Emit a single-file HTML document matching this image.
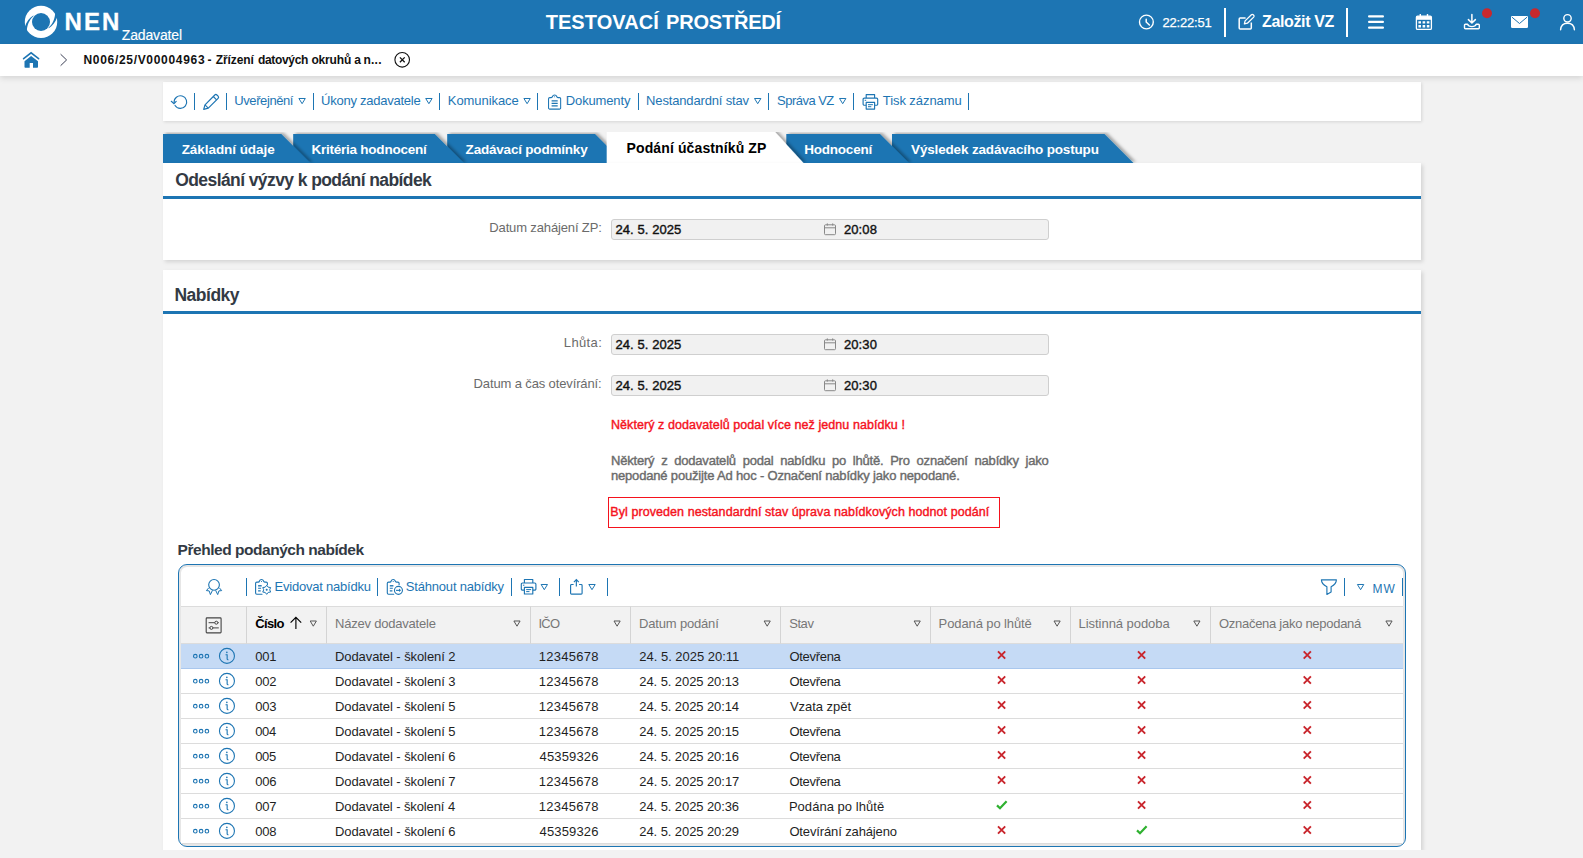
<!DOCTYPE html>
<html lang="cs"><head><meta charset="utf-8"><title>NEN - Zadavatel</title><style>
html,body{margin:0;padding:0}
body{width:1583px;height:858px;position:relative;overflow:hidden;background:#F2F2F2;font-family:"Liberation Sans",sans-serif;color:#222}
.t{position:absolute;white-space:nowrap;line-height:1;display:block;margin:0;font-weight:400;font-style:normal;text-decoration:none}
.bx{position:absolute;display:block}
.sp{position:absolute;display:block}
.ic{position:absolute;overflow:visible;display:block}
table{position:absolute;border-collapse:collapse;table-layout:fixed}

table{border-collapse:separate;border-spacing:0}
th,td{padding:0;margin:0;font-weight:400;text-align:left}
th{height:36px;background:#f2f2f2;border-top:1px solid #dcdcdc;border-bottom:1px solid #dcdcdc;border-right:1px solid #d4d4d4}
th:last-child{border-right:0}
td{height:24px;border-bottom:1px solid #dcdcdc;background:#fff}
tr.sel td{background:#C5DAF5;border-bottom-color:#a9c7ee}
</style></head>
<body>
<header><div class="bx" style="left:0;top:0;width:1583px;height:44px;background:#1D75B3"></div><svg class="ic" style="left:24px;top:5px" width="34" height="34" viewBox="24 5 34 34">
<circle cx="41" cy="21.9" r="16.2" fill="#fff"/><circle cx="41" cy="22" r="9" fill="#1D75B3"/>
<path d="M33.300 15.600C29.500 18 26.600 21.500 24.700 27.200L26.800 31.400C26.900 25.500 29.300 19.800 33.600 16.100Z" fill="#1D75B3"/>
<path d="M33.300 15.600C29.500 18 26.600 21.500 24.700 27.200L26.800 31.400C26.900 25.500 29.300 19.800 33.600 16.100Z" fill="#1D75B3" transform="rotate(180 41 21.950)"/>
</svg><span class="t" style="left:64.5px;top:10px;font-size:24px;font-weight:700;color:#fff;letter-spacing:2.12px;-webkit-text-stroke:.300px;">NEN</span><span class="t" style="left:121.75px;top:28px;font-size:14px;color:#fff;letter-spacing:-0.14px;-webkit-text-stroke:.150px;">Zadavatel</span><span class="t" style="left:545.65px;top:12px;font-size:20px;font-weight:700;color:#fff;letter-spacing:0.06px;">TESTOVACÍ</span><span class="t" style="left:666.05px;top:12px;font-size:20px;font-weight:700;color:#fff;letter-spacing:-0.21px;">PROSTŘEDÍ</span><svg class="ic" style="left:1138px;top:13px" width="18" height="18" viewBox="1138 13 18 18"><circle cx="1146.400" cy="22" r="6.900" fill="none" stroke="#fff" stroke-width="1.400"/><path d="M1146.200 19.200V22l3.200 3" fill="none" stroke="#fff" stroke-width="1.5" stroke-linecap="round" stroke-linejoin="round"/></svg><span class="t" style="left:1162.5px;top:16px;font-size:13px;color:#fff;letter-spacing:-0.21px;-webkit-text-stroke:.250px;">22:22:51</span><i class="sp" style="left:1224px;top:8px;height:29px;width:2.2px;background:#fff"></i><svg class="ic" style="left:1237px;top:13px" width="19" height="19" viewBox="1237 13 19 19"><path d="M1245.600 18.100h-5.400a1 1 0 0 0-1 1v9a1 1 0 0 0 1 1h10.100a1 1 0 0 0 1-1v-5.600" fill="none" stroke="#fff" stroke-width="1.500"/><path d="M1244.400 23.900l.7-3 6.300-6.100a1.300 1.300 0 0 1 1.800 0l.5.500a1.300 1.300 0 0 1 0 1.800l-6.300 6.100z" fill="none" stroke="#fff" stroke-width="1.300" stroke-linejoin="round"/></svg><span class="t" style="left:1262px;top:14px;font-size:16px;font-weight:700;color:#fff;letter-spacing:-0.36px;">Založit VZ</span><i class="sp" style="left:1346px;top:8px;height:29px;width:2px;background:#fff"></i><svg class="ic" style="left:1368px;top:15px" width="16" height="14" viewBox="0 0 16 14"><rect x="0" y=".2" width="16" height="2.3" rx="1.1" fill="#fff"/><rect x="0" y="5.8" width="16" height="2.3" rx="1.1" fill="#fff"/><rect x="0" y="11.5" width="16" height="2.3" rx="1.1" fill="#fff"/></svg><svg class="ic" style="left:1415px;top:13px" width="18" height="18" viewBox="1415 13 18 18"><rect x="1416.4" y="16.2" width="15" height="13.2" rx="1.2" fill="none" stroke="#fff" stroke-width="1.3"/><rect x="1416.4" y="16.2" width="15" height="3.6" fill="#fff"/><rect x="1419.6" y="14" width="1.4" height="3" fill="#fff"/><rect x="1426.8" y="14" width="1.4" height="3" fill="#fff"/>
<path d="M1418.4 21.2h2.6v2.4h-2.6zM1422.6 21.2h2.6v2.4h-2.6zM1426.8 21.2h2.6v2.4h-2.6zM1418.4 25h2.6v2.4h-2.6zM1422.6 25h2.6v2.4h-2.6zM1426.8 25h2.6v2.4h-2.6z" fill="#fff"/></svg><svg class="ic" style="left:1463px;top:13px" width="30" height="18" viewBox="1463 13 30 18"><path d="M1471.9 14.4v8.2M1468.4 19.6l3.5 3.4 3.5-3.4" fill="none" stroke="#fff" stroke-width="1.5" stroke-linecap="round" stroke-linejoin="round"/><path d="M1467.6 24.3h-2.2a.9.9 0 0 0-.9.9v2.6a.9.9 0 0 0 .9.9h13a.9.9 0 0 0 .9-.9v-2.6a.9.9 0 0 0-.9-.9h-2.2c-.5 1.4-2 2.3-4.300 2.300s-3.800-.9-4.300-2.300z" fill="none" stroke="#fff" stroke-width="1.4" stroke-linejoin="round"/><circle cx="1487" cy="13.2" r="5" fill="#C8282D"/></svg><svg class="ic" style="left:1510px;top:8px" width="32" height="22" viewBox="1510 8 32 22"><rect x="1511" y="16" width="17" height="12" rx="1.3" fill="#fff"/><path d="M1512 17.200l7.500 6.300 7.500-6.300" fill="none" stroke="#1D75B3" stroke-width="1"/><circle cx="1535" cy="13.2" r="5" fill="#C8282D"/></svg><svg class="ic" style="left:1559px;top:13px" width="18" height="18" viewBox="1559 13 18 18"><circle cx="1567.5" cy="18.3" r="3.7" fill="none" stroke="#fff" stroke-width="1.4"/><path d="M1560.6 29.8c.3-4.300 3.200-6.600 6.900-6.600s6.600 2.300 6.900 6.600" fill="none" stroke="#fff" stroke-width="1.4" stroke-linecap="round"/></svg></header>
<nav style="position:absolute;left:0;top:0;width:0;height:0;z-index:2"><div class="bx" style="left:0;top:44px;width:1583px;height:32px;background:#fff;box-shadow:0 2px 6px rgba(0,0,0,.13)"></div><svg class="ic" style="left:22px;top:51px" width="18" height="18" viewBox="22 51 18 18"><path d="M23.600 58.700L31.100 52.800l7.500 5.900" fill="none" stroke="#1D75B3" stroke-width="1.600" stroke-linecap="round" stroke-linejoin="miter"/><path d="M24.500 61.300L31.100 56l6.900 5.300v5.600a.8.800 0 0 1-.8.800h-4.200v-4.700h-3.300v4.700h-4.400a.8.800 0 0 1-.8-.8z" fill="#1D75B3"/></svg><svg class="ic" style="left:59px;top:53px" width="10" height="14" viewBox="59 53 10 14"><path d="M60.600 54.200l6 5.750-6 5.750" fill="none" stroke="#3b3f55" stroke-width="1"/></svg><span class="t" style="left:83.45px;top:54px;font-size:12px;font-weight:700;color:#111;letter-spacing:0.69px;">N006/25/V00004963</span><span class="t" style="left:207.4px;top:54px;font-size:12px;font-weight:700;color:#111;">-</span><span class="t" style="left:215.75px;top:54px;font-size:12px;font-weight:700;color:#111;letter-spacing:-0.09px;">Zřízení</span><span class="t" style="left:257.9px;top:54px;font-size:12px;font-weight:700;color:#111;letter-spacing:-0.31px;">datových</span><span class="t" style="left:311.4px;top:54px;font-size:12px;font-weight:700;color:#111;letter-spacing:-0.16px;">okruhů</span><span class="t" style="left:354.35px;top:54px;font-size:12px;font-weight:700;color:#111;">a</span><span class="t" style="left:363.45px;top:54px;font-size:12px;font-weight:700;color:#111;letter-spacing:0.25px;">n...</span><svg class="ic" style="left:394px;top:51px" width="17" height="17" viewBox="394 51 17 17"><circle cx="402.200" cy="59.800" r="7.300" fill="none" stroke="#111" stroke-width="1.100"/><path d="M399.900 57.400l4.800 4.800m0-4.800l-4.800 4.800" stroke="#111" stroke-width="1.300" fill="none"/></svg></nav>
<main>
<div class="bx" style="left:163px;top:82px;width:1258px;height:39px;background:#fff;box-shadow:1px 1px 3px rgba(0,0,0,.12)"></div><svg class="ic" style="left:170px;top:93px" width="19" height="18" viewBox="170 93 19 18"><path d="M174.130 102.650A6.300 6.300 0 1 1 175.060 105.440" fill="none" stroke="#1D75B3" stroke-width="1.150" stroke-linecap="round"/><path d="M171.300 101.300l2.650 2.400 2.250-2.300" fill="none" stroke="#1D75B3" stroke-width="1.150" stroke-linecap="round" stroke-linejoin="miter"/></svg><i class="sp" style="left:194px;top:93px;height:17px;width:1px;background:#1D75B3"></i><svg class="ic" style="left:202px;top:93px" width="18" height="18" viewBox="202 93 18 18"><path d="M203.700 109.400l1.300-4.600 9.800-9.800a1.500 1.500 0 0 1 2.100 0l1.200 1.200a1.500 1.500 0 0 1 0 2.100l-9.800 9.800z" fill="none" stroke="#1D75B3" stroke-width="1.200" stroke-linejoin="round"/><path d="M213.300 96.500l3.300 3.300M205 104.800l3.300 3.300" stroke="#1D75B3" stroke-width="1.100" fill="none"/></svg><i class="sp" style="left:226px;top:93px;height:17px;width:1px;background:#1D75B3"></i><span class="t" style="left:234.3px;top:94px;font-size:13px;color:#1D75B3;letter-spacing:-0.41px;">Uveřejnění</span><svg class="ic" style="left:298px;top:97px" width="7.6" height="6.4" viewBox="-0.3 -0.9 7.6 6.4"><path d="M.6 .6H7L3.8 5.8Z" fill="none" stroke="#1D75B3" stroke-width="1" stroke-linejoin="round"/></svg><i class="sp" style="left:313px;top:93px;height:17px;width:1px;background:#1D75B3"></i><span class="t" style="left:321px;top:94px;font-size:13px;color:#1D75B3;letter-spacing:-0.24px;">Úkony zadavatele</span><svg class="ic" style="left:425px;top:97px" width="7.6" height="6.4" viewBox="-0.1 -0.9 7.6 6.4"><path d="M.6 .6H7L3.8 5.8Z" fill="none" stroke="#1D75B3" stroke-width="1" stroke-linejoin="round"/></svg><i class="sp" style="left:439px;top:93px;height:17px;width:1px;background:#1D75B3"></i><span class="t" style="left:447.8px;top:94px;font-size:13px;color:#1D75B3;letter-spacing:-0.07px;">Komunikace</span><svg class="ic" style="left:523px;top:97px" width="7.6" height="6.4" viewBox="-0.3 -0.9 7.6 6.4"><path d="M.6 .6H7L3.8 5.8Z" fill="none" stroke="#1D75B3" stroke-width="1" stroke-linejoin="round"/></svg><i class="sp" style="left:537px;top:93px;height:17px;width:1px;background:#1D75B3"></i><svg class="ic" style="left:547px;top:93px" width="15" height="17" viewBox="0 -0.4 15 17"><path d="M2.750 4.200H4.200C5 4.200 5.300 3.800 5.500 3.100C5.800 2.100 6.600 1.500 7.600 1.500S9.400 2.100 9.700 3.100C9.900 3.800 10.200 4.200 11 4.200H12.450a1.200 1.200 0 0 1 1.200 1.200v9.100a1.200 1.200 0 0 1-1.200 1.200H2.750a1.200 1.200 0 0 1-1.200-1.200V5.400a1.200 1.200 0 0 1 1.200-1.200z" fill="none" stroke="#1D75B3" stroke-width="1.050" stroke-linejoin="round"/><circle cx="7.600" cy="3.300" r=".5" fill="#1D75B3"/><path d="M4.600 7.500h6.100M4.600 10h6.100M4.600 12.450h6.100" stroke="#1D75B3" stroke-width="1.300"/></svg><span class="t" style="left:565.8px;top:94px;font-size:13px;color:#1D75B3;letter-spacing:-0.14px;">Dokumenty</span><i class="sp" style="left:638px;top:93px;height:17px;width:1px;background:#1D75B3"></i><span class="t" style="left:646.1px;top:94px;font-size:13px;color:#1D75B3;letter-spacing:-0.16px;">Nestandardní stav</span><svg class="ic" style="left:753px;top:97px" width="7.6" height="6.4" viewBox="-0.9 -0.9 7.6 6.4"><path d="M.6 .6H7L3.8 5.8Z" fill="none" stroke="#1D75B3" stroke-width="1" stroke-linejoin="round"/></svg><i class="sp" style="left:768px;top:93px;height:17px;width:1px;background:#1D75B3"></i><span class="t" style="left:777.05px;top:94px;font-size:13px;color:#1D75B3;letter-spacing:-0.52px;">Správa VZ</span><svg class="ic" style="left:838px;top:97px" width="7.6" height="6.4" viewBox="-0.9 -0.9 7.6 6.4"><path d="M.6 .6H7L3.8 5.8Z" fill="none" stroke="#1D75B3" stroke-width="1" stroke-linejoin="round"/></svg><i class="sp" style="left:853px;top:93px;height:17px;width:1px;background:#1D75B3"></i><svg class="ic" style="left:862px;top:93px" width="17" height="17" viewBox="-0.1 -0.1 17 17"><path d="M4.100 5V1.500h8.400V5" fill="none" stroke="#1D75B3" stroke-width="1.150" stroke-linejoin="round"/><path d="M4.100 12.100H2.200a1.200 1.200 0 0 1-1.200-1.200V6.200a1.200 1.200 0 0 1 1.200-1.200h12.200a1.200 1.200 0 0 1 1.200 1.200v4.700a1.200 1.200 0 0 1-1.200 1.200h-1.900" fill="none" stroke="#1D75B3" stroke-width="1.150"/><rect x="4.100" y="9.300" width="8.400" height="6.700" fill="none" stroke="#1D75B3" stroke-width="1.150" stroke-linejoin="round"/><path d="M5.900 11.600h4.900M5.900 13.600h3.300" stroke="#1D75B3" stroke-width="1"/><path d="M2.600 7.200h1.500" stroke="#1D75B3" stroke-width="1"/></svg><span class="t" style="left:882.75px;top:94px;font-size:13px;color:#1D75B3;letter-spacing:-0.07px;">Tisk záznamu</span><i class="sp" style="left:968px;top:93px;height:17px;width:1px;background:#1D75B3"></i>
<svg class="ic" style="left:150px;top:132px;overflow:hidden" width="1000" height="31" viewBox="150 132 1000 31"><defs><filter id="ts" x="-5%" y="-30%" width="110%" height="160%"><feDropShadow dx="2.500" dy="-1" stdDeviation="1.700" flood-color="#000" flood-opacity=".32"/></filter></defs><polygon points="892,134 1104.5,134 1133.5,163 892,163" fill="#1D75B3" filter="url(#ts)"/><polygon points="786.3,134 880,134 909,163 786.3,163" fill="#1D75B3" filter="url(#ts)"/><polygon points="447.2,134 595,134 624,163 447.2,163" fill="#1D75B3" filter="url(#ts)"/><polygon points="293.2,134 434.8,134 463.8,163 293.2,163" fill="#1D75B3" filter="url(#ts)"/><polygon points="163,134 281.3,134 310.3,163 163,163" fill="#1D75B3" filter="url(#ts)"/><polygon points="606.7,132 775,132 803.5,163 606.7,163" fill="#fff" filter="url(#ts)"/></svg><span class="t" style="left:181.7px;top:143px;font-size:13.5px;font-weight:700;color:#fff;letter-spacing:-0.06px;">Základní údaje</span><span class="t" style="left:311.5px;top:143px;font-size:13.5px;font-weight:700;color:#fff;letter-spacing:-0.24px;">Kritéria hodnocení</span><span class="t" style="left:465.6px;top:143px;font-size:13.5px;font-weight:700;color:#fff;letter-spacing:-0.2px;">Zadávací podmínky</span><span class="t" style="left:626.5px;top:141px;font-size:14px;font-weight:700;color:#000;letter-spacing:0.12px;">Podání účastníků ZP</span><span class="t" style="left:804.2px;top:143px;font-size:13.5px;font-weight:700;color:#fff;letter-spacing:-0.21px;">Hodnocení</span><span class="t" style="left:911.05px;top:143px;font-size:13.5px;font-weight:700;color:#fff;letter-spacing:-0.16px;">Výsledek zadávacího postupu</span>
<section><div class="bx" style="left:163px;top:163px;width:1258px;height:97px;background:#fff;box-shadow:1.500px 2px 4px rgba(0,0,0,.13)"></div><div class="bx" style="left:163px;top:196px;width:1258px;height:3px;background:#1D75B3"></div><h2 class="t" style="left:175.25px;top:172px;font-size:17.5px;font-weight:700;color:#333a44;letter-spacing:-0.59px;">Odeslání výzvy k podání nabídek</h2><div class="bx" style="left:611px;top:219px;width:436px;height:19px;background:#f1f1f1;border:1px solid #cfcfcf;border-radius:3px"></div><label class="t" style="left:489.3px;top:221px;font-size:13px;color:#6b6b6b;letter-spacing:-0.14px;">Datum zahájení ZP:</label><span class="t" style="left:615.5px;top:223px;font-size:13px;-webkit-text-stroke:.4px;color:#111;letter-spacing:0.07px;">24. 5. 2025</span><svg class="ic" style="left:824px;top:223px" width="12" height="12" viewBox="0 -0.2 12 12"><rect x=".5" y="1.600" width="11" height="9.900" rx="1" fill="none" stroke="#888" stroke-width="1"/><path d="M.5 4.600h11M3.300 .2v2.200M8.700 .2v2.200" stroke="#888" stroke-width="1" fill="none"/></svg><span class="t" style="left:843.9px;top:223px;font-size:13px;-webkit-text-stroke:.4px;color:#111;letter-spacing:0.11px;">20:08</span></section>
<section><div class="bx" style="left:163px;top:270px;width:1258px;height:580px;background:#fff;box-shadow:1.500px 2px 4px rgba(0,0,0,.13)"></div><div class="bx" style="left:0;top:850px;width:1583px;height:8px;background:#F2F2F2"></div><div class="bx" style="left:163px;top:311px;width:1258px;height:3px;background:#1D75B3"></div><h2 class="t" style="left:174.45px;top:287px;font-size:17.5px;font-weight:700;color:#333a44;letter-spacing:-0.49px;">Nabídky</h2><div class="bx" style="left:611px;top:334px;width:436px;height:19px;background:#f1f1f1;border:1px solid #cfcfcf;border-radius:3px"></div><label class="t" style="left:563.8px;top:336px;font-size:13px;color:#6b6b6b;letter-spacing:0.36px;">Lhůta:</label><span class="t" style="left:615.5px;top:338px;font-size:13px;-webkit-text-stroke:.4px;color:#111;letter-spacing:0.07px;">24. 5. 2025</span><svg class="ic" style="left:824px;top:338px" width="12" height="12" viewBox="0 -0.2 12 12"><rect x=".5" y="1.600" width="11" height="9.900" rx="1" fill="none" stroke="#888" stroke-width="1"/><path d="M.5 4.600h11M3.300 .2v2.200M8.700 .2v2.200" stroke="#888" stroke-width="1" fill="none"/></svg><span class="t" style="left:843.9px;top:338px;font-size:13px;-webkit-text-stroke:.4px;color:#111;letter-spacing:0.11px;">20:30</span><div class="bx" style="left:611px;top:375px;width:436px;height:19px;background:#f1f1f1;border:1px solid #cfcfcf;border-radius:3px"></div><label class="t" style="left:473.6px;top:377px;font-size:13px;color:#6b6b6b;letter-spacing:-0.13px;">Datum a čas otevírání:</label><span class="t" style="left:615.5px;top:379px;font-size:13px;-webkit-text-stroke:.4px;color:#111;letter-spacing:0.07px;">24. 5. 2025</span><svg class="ic" style="left:824px;top:379px" width="12" height="12" viewBox="0 -0.2 12 12"><rect x=".5" y="1.600" width="11" height="9.900" rx="1" fill="none" stroke="#888" stroke-width="1"/><path d="M.5 4.600h11M3.300 .2v2.200M8.700 .2v2.200" stroke="#888" stroke-width="1" fill="none"/></svg><span class="t" style="left:843.9px;top:379px;font-size:13px;-webkit-text-stroke:.4px;color:#111;letter-spacing:0.11px;">20:30</span><span class="t" style="left:610.95px;top:419px;font-size:12.5px;-webkit-text-stroke:.4px;color:#f5121d;letter-spacing:0.07px;">Některý z dodavatelů podal více než jednu nabídku !</span><span class="t" style="left:610.95px;top:454px;font-size:13px;-webkit-text-stroke:.4px;color:#6b6b6b;letter-spacing:-0.19px;word-spacing:3.32px;">Některý z dodavatelů podal nabídku po lhůtě. Pro označení nabídky jako</span><span class="t" style="left:610.95px;top:469px;font-size:13px;-webkit-text-stroke:.4px;color:#6b6b6b;letter-spacing:-0.17px;">nepodané použijte Ad hoc - Označení nabídky jako nepodané.</span><div class="bx" style="left:608px;top:497px;width:390px;height:29px;border:1px solid #f5121d"></div><span class="t" style="left:610.35px;top:506px;font-size:12.5px;-webkit-text-stroke:.4px;color:#f5121d;letter-spacing:0.07px;">Byl proveden nestandardní stav úprava nabídkových hodnot podání</span><h3 class="t" style="left:177.6px;top:542px;font-size:15.5px;font-weight:700;color:#333a44;letter-spacing:-0.47px;">Přehled podaných nabídek</h3><div class="bx" style="left:178px;top:564px;width:1226px;height:281px;border:1px solid #1D75B3;border-radius:9px;box-shadow:inset 0 0 0 2px #e6e6e6"></div><svg class="ic" style="left:205px;top:578px" width="18" height="18" viewBox="205 578 18 18"><circle cx="214.050" cy="584.850" r="5.350" fill="none" stroke="#1D75B3" stroke-width="1.100"/><path d="M208.700 587.900l-2.300 2.700 2.800.3 1.200 3.700 2.100-4.300M219.400 587.900l2.300 2.700-2.800.3-1.200 3.700-2.100-4.300" fill="none" stroke="#1D75B3" stroke-width="1" stroke-linejoin="miter"/></svg><i class="sp" style="left:246px;top:578px;height:18px;width:1px;background:#1D75B3"></i><svg class="ic" style="left:254px;top:579px" width="18" height="17" viewBox="0 0 18 17"><path d="M8 15.200H2.800a1.200 1.200 0 0 1-1.200-1.200V4.300a1.200 1.200 0 0 1 1.200-1.200H4.200C5 3.100 5.300 2.700 5.500 2C5.800 1 6.500.5 7.500.5S9.200 1 9.500 2C9.700 2.700 10 3.100 10.800 3.100H12.200a1.200 1.200 0 0 1 1.200 1.200v1.500" fill="none" stroke="#1D75B3" stroke-width="1.100" stroke-linecap="round"/><circle cx="7.500" cy="2.500" r=".55" fill="#1D75B3"/><path d="M4.100 6.800h3.600" stroke="#1D75B3" stroke-width="1.400"/><path d="M4.100 9.300h3M4.100 11.900h2.600" stroke="#1D75B3" stroke-width="1.100"/><path d="M12.70 6.25L14.20 8.20L16.64 8.53L15.70 10.80L16.64 13.07L14.20 13.40L12.70 15.35L11.20 13.40L8.76 13.07L9.70 10.80L8.76 8.53L11.20 8.20Z" fill="#fff" stroke="#1D75B3" stroke-width="1" stroke-linejoin="round"/><circle cx="12.700" cy="10.800" r="1" fill="#1D75B3"/></svg><span class="t" style="left:274.5px;top:580px;font-size:13px;color:#1D75B3;letter-spacing:-0.22px;">Evidovat nabídku</span><i class="sp" style="left:377px;top:578px;height:18px;width:1px;background:#1D75B3"></i><svg class="ic" style="left:385px;top:579px" width="18" height="17" viewBox="-0.7 0 18 17"><path d="M8 15.200H2.800a1.200 1.200 0 0 1-1.200-1.200V4.300a1.200 1.200 0 0 1 1.200-1.200H4.200C5 3.100 5.300 2.700 5.500 2C5.800 1 6.500.5 7.500.5S9.200 1 9.500 2C9.700 2.700 10 3.100 10.800 3.100H12.200a1.200 1.200 0 0 1 1.200 1.200v1.500" fill="none" stroke="#1D75B3" stroke-width="1.100" stroke-linecap="round"/><circle cx="7.500" cy="2.500" r=".55" fill="#1D75B3"/><path d="M4.100 6.800h3.600" stroke="#1D75B3" stroke-width="1.400"/><path d="M4.100 9.300h3M4.100 11.900h2.600" stroke="#1D75B3" stroke-width="1.100"/><circle cx="12.750" cy="11.350" r="4" fill="#fff" stroke="#1D75B3" stroke-width="1.100"/><path d="M10.300 11.350h4.200" fill="none" stroke="#1D75B3" stroke-width="1.100"/><path d="M13.300 9.600l2 1.750-2 1.750z" fill="#1D75B3"/></svg><span class="t" style="left:405.85px;top:580px;font-size:13px;color:#1D75B3;letter-spacing:-0.2px;">Stáhnout nabídky</span><i class="sp" style="left:511px;top:578px;height:18px;width:1px;background:#1D75B3"></i><svg class="ic" style="left:520px;top:578px" width="17" height="17" viewBox="-0.3 0 17 17"><path d="M4.100 5V1.500h8.400V5" fill="none" stroke="#1D75B3" stroke-width="1.150" stroke-linejoin="round"/><path d="M4.100 12.100H2.200a1.200 1.200 0 0 1-1.200-1.200V6.200a1.200 1.200 0 0 1 1.200-1.200h12.200a1.200 1.200 0 0 1 1.200 1.200v4.700a1.200 1.200 0 0 1-1.200 1.200h-1.900" fill="none" stroke="#1D75B3" stroke-width="1.150"/><rect x="4.100" y="9.300" width="8.400" height="6.700" fill="none" stroke="#1D75B3" stroke-width="1.150" stroke-linejoin="round"/><path d="M5.900 11.600h4.900M5.900 13.600h3.300" stroke="#1D75B3" stroke-width="1"/><path d="M2.600 7.200h1.500" stroke="#1D75B3" stroke-width="1"/></svg><svg class="ic" style="left:540px;top:583px" width="7.6" height="6.4" viewBox="-0.5 -0.9 7.6 6.4"><path d="M.6 .6H7L3.8 5.8Z" fill="none" stroke="#1D75B3" stroke-width="1" stroke-linejoin="round"/></svg><i class="sp" style="left:559px;top:578px;height:18px;width:1px;background:#1D75B3"></i><svg class="ic" style="left:568px;top:578px" width="16" height="18" viewBox="568 578 16 18"><path d="M573.600 584.500h-2.100a.9.900 0 0 0-.9.900v7.800a.9.900 0 0 0 .9.900h9.700a.9.900 0 0 0 .9-.9v-7.800a.9.900 0 0 0-.9-.9h-2.100" fill="none" stroke="#1D75B3" stroke-width="1.150"/><path d="M576.350 586.600v-6.800M573.900 582.100l2.450-2.450 2.450 2.450" fill="none" stroke="#1D75B3" stroke-width="1.150" stroke-linejoin="miter"/></svg><svg class="ic" style="left:588px;top:583px" width="7.6" height="6.4" viewBox="-0.2 -0.9 7.6 6.4"><path d="M.6 .6H7L3.8 5.8Z" fill="none" stroke="#1D75B3" stroke-width="1" stroke-linejoin="round"/></svg><i class="sp" style="left:607px;top:578px;height:18px;width:1px;background:#1D75B3"></i><svg class="ic" style="left:1320px;top:578px" width="18" height="18" viewBox="1320 578 18 18"><path d="M1321.400 579.800h15c0 3.300-2.500 5.500-5.300 7v5.300l-4.200 2.300v-7.600c-2.900-1.500-5.500-3.700-5.500-7z" fill="none" stroke="#1D75B3" stroke-width="1.150" stroke-linejoin="round"/></svg><i class="sp" style="left:1344px;top:578px;height:18px;width:1px;background:#1D75B3"></i><svg class="ic" style="left:1356px;top:583px" width="7.6" height="6.4" viewBox="-0.8 -0.9 7.6 6.4"><path d="M.6 .6H7L3.8 5.8Z" fill="none" stroke="#1D75B3" stroke-width="1" stroke-linejoin="round"/></svg><span class="t" style="left:1372.4px;top:583px;font-size:12px;color:#1D75B3;letter-spacing:1.15px;">MW</span><i class="sp" style="left:1402px;top:578px;height:18px;width:1px;background:#1D75B3"></i><table style="left:181px;top:606px;width:1222px"><colgroup><col style="width:66px"><col style="width:80px"><col style="width:204px"><col style="width:100px"><col style="width:150px"><col style="width:150px"><col style="width:140px"><col style="width:140px"><col style="width:192px"></colgroup><thead><tr><th><svg class="ic" style="left:24px;top:11px" width="17" height="16" viewBox="-0.6 -0.3 17 16"><rect x=".6" y=".6" width="14.900" height="15" rx=".8" fill="none" stroke="#444" stroke-width="1.100"/><path d="M3 5.400h6.200M12.200 5.400h1M3 10.600h1.300M7.200 10.600h6" stroke="#444" stroke-width="1" fill="none"/><circle cx="10.700" cy="5.400" r="1.500" fill="none" stroke="#444" stroke-width="1"/><circle cx="5.800" cy="10.600" r="1.500" fill="none" stroke="#444" stroke-width="1"/></svg></th><th><span class="t" style="left:74.3px;top:11px;font-size:13px;font-weight:700;color:#000;letter-spacing:-0.66px;">Číslo</span><svg class="ic" style="left:108px;top:10px" width="12" height="13" viewBox="-0.9 -0.6 12 13"><path d="M6 12.400V1M.7 6.100L6 .8l5.300 5.300" fill="none" stroke="#000" stroke-width="1.150"/></svg><svg class="ic" style="left:128px;top:14px" width="7.4" height="6.4" viewBox="-0.6 -0.4 7.4 6.4"><path d="M.6 .6H6.8L3.7 5.8Z" fill="none" stroke="#555" stroke-width="1" stroke-linejoin="round"/></svg></th><th><span class="t" style="left:154px;top:11px;font-size:13px;color:#777;letter-spacing:-0.21px;">Název dodavatele</span><svg class="ic" style="left:332px;top:14px" width="7.4" height="6.4" viewBox="-0.3 -0.4 7.4 6.4"><path d="M.6 .6H6.8L3.7 5.8Z" fill="none" stroke="#555" stroke-width="1" stroke-linejoin="round"/></svg></th><th><span class="t" style="left:357.55px;top:11px;font-size:13px;color:#777;letter-spacing:-0.83px;">IČO</span><svg class="ic" style="left:432px;top:14px" width="7.4" height="6.4" viewBox="-0.4 -0.4 7.4 6.4"><path d="M.6 .6H6.8L3.7 5.8Z" fill="none" stroke="#555" stroke-width="1" stroke-linejoin="round"/></svg></th><th><span class="t" style="left:458.1px;top:11px;font-size:13px;color:#777;letter-spacing:-0.18px;">Datum podání</span><svg class="ic" style="left:582px;top:14px" width="7.4" height="6.4" viewBox="-0.5 -0.4 7.4 6.4"><path d="M.6 .6H6.8L3.7 5.8Z" fill="none" stroke="#555" stroke-width="1" stroke-linejoin="round"/></svg></th><th><span class="t" style="left:608.15px;top:11px;font-size:13px;color:#777;letter-spacing:-0.42px;">Stav</span><svg class="ic" style="left:732px;top:14px" width="7.4" height="6.4" viewBox="-0.5 -0.4 7.4 6.4"><path d="M.6 .6H6.8L3.7 5.8Z" fill="none" stroke="#555" stroke-width="1" stroke-linejoin="round"/></svg></th><th><span class="t" style="left:757.6px;top:11px;font-size:13px;color:#777;letter-spacing:-0.11px;">Podaná po lhůtě</span><svg class="ic" style="left:872px;top:14px" width="7.4" height="6.4" viewBox="-0.4 -0.4 7.4 6.4"><path d="M.6 .6H6.8L3.7 5.8Z" fill="none" stroke="#555" stroke-width="1" stroke-linejoin="round"/></svg></th><th><span class="t" style="left:897.6px;top:11px;font-size:13px;color:#777;letter-spacing:-0.05px;">Listinná podoba</span><svg class="ic" style="left:1012px;top:14px" width="7.4" height="6.4" viewBox="-0.2 -0.4 7.4 6.4"><path d="M.6 .6H6.8L3.7 5.8Z" fill="none" stroke="#555" stroke-width="1" stroke-linejoin="round"/></svg></th><th><span class="t" style="left:1038px;top:11px;font-size:13px;color:#777;letter-spacing:-0.28px;">Označena jako nepodaná</span><svg class="ic" style="left:1204px;top:14px" width="7.4" height="6.4" viewBox="-0.3 -0.4 7.4 6.4"><path d="M.6 .6H6.8L3.7 5.8Z" fill="none" stroke="#555" stroke-width="1" stroke-linejoin="round"/></svg></th></tr></thead><tbody><tr class="sel"><td><svg class="ic" style="left:11px;top:47px" width="17" height="6" viewBox="-0.8 -0.2 17 6"><circle cx="2.500" cy="3" r="1.800" fill="none" stroke="#1D75B3" stroke-width="1.100"/><circle cx="8.300" cy="3" r="1.800" fill="none" stroke="#1D75B3" stroke-width="1.100"/><circle cx="14.100" cy="3" r="1.800" fill="none" stroke="#1D75B3" stroke-width="1.100"/></svg><svg class="ic" style="left:37px;top:41px" width="17" height="17" viewBox="-0.45 -0.4 17 17"><circle cx="8.500" cy="8.500" r="7.500" fill="none" stroke="#1D75B3" stroke-width="1.100"/><path d="M7.500 7.300h1.200v4.200c0 .6.300.9.900.9" fill="none" stroke="#1D75B3" stroke-width="1.100" stroke-linecap="round"/><circle cx="8.400" cy="5" r=".8" fill="#1D75B3"/></svg></td><td><span class="t" style="left:74.3px;top:44px;font-size:13px;color:#1f1f1f;letter-spacing:-0.3px;">001</span></td><td><span class="t" style="left:154px;top:44px;font-size:13px;color:#1f1f1f;letter-spacing:-0.08px;">Dodavatel - školení 2</span></td><td><span class="t" style="left:357.8px;top:44px;font-size:13px;color:#1f1f1f;letter-spacing:0.25px;">12345678</span></td><td><span class="t" style="left:458.35px;top:44px;font-size:13px;color:#1f1f1f;letter-spacing:-0.02px;">24. 5. 2025 20:11</span></td><td><span class="t" style="left:608.4px;top:44px;font-size:13px;color:#1f1f1f;letter-spacing:-0.29px;">Otevřena</span></td><td><svg class="ic" style="left:815px;top:44px" width="10" height="10" viewBox="-0.6 0 10 10"><path d="M1.400 1.400l7.200 7.200M8.600 1.400l-7.200 7.200" stroke="#C9252C" stroke-width="1.900" fill="none"/></svg></td><td><svg class="ic" style="left:955px;top:44px" width="10" height="10" viewBox="-0.6 0 10 10"><path d="M1.400 1.400l7.200 7.200M8.600 1.400l-7.200 7.200" stroke="#C9252C" stroke-width="1.900" fill="none"/></svg></td><td><svg class="ic" style="left:1121px;top:44px" width="10" height="10" viewBox="-0.3 0 10 10"><path d="M1.400 1.400l7.200 7.200M8.600 1.400l-7.200 7.200" stroke="#C9252C" stroke-width="1.900" fill="none"/></svg></td></tr><tr><td><svg class="ic" style="left:11px;top:72px" width="17" height="6" viewBox="-0.8 -0.2 17 6"><circle cx="2.500" cy="3" r="1.800" fill="none" stroke="#1D75B3" stroke-width="1.100"/><circle cx="8.300" cy="3" r="1.800" fill="none" stroke="#1D75B3" stroke-width="1.100"/><circle cx="14.100" cy="3" r="1.800" fill="none" stroke="#1D75B3" stroke-width="1.100"/></svg><svg class="ic" style="left:37px;top:66px" width="17" height="17" viewBox="-0.45 -0.4 17 17"><circle cx="8.500" cy="8.500" r="7.500" fill="none" stroke="#1D75B3" stroke-width="1.100"/><path d="M7.500 7.300h1.200v4.200c0 .6.300.9.900.9" fill="none" stroke="#1D75B3" stroke-width="1.100" stroke-linecap="round"/><circle cx="8.400" cy="5" r=".8" fill="#1D75B3"/></svg></td><td><span class="t" style="left:74.3px;top:69px;font-size:13px;color:#1f1f1f;letter-spacing:-0.3px;">002</span></td><td><span class="t" style="left:154px;top:69px;font-size:13px;color:#1f1f1f;letter-spacing:-0.08px;">Dodavatel - školení 3</span></td><td><span class="t" style="left:357.8px;top:69px;font-size:13px;color:#1f1f1f;letter-spacing:0.25px;">12345678</span></td><td><span class="t" style="left:458.35px;top:69px;font-size:13px;color:#1f1f1f;letter-spacing:-0.09px;">24. 5. 2025 20:13</span></td><td><span class="t" style="left:608.4px;top:69px;font-size:13px;color:#1f1f1f;letter-spacing:-0.29px;">Otevřena</span></td><td><svg class="ic" style="left:815px;top:69px" width="10" height="10" viewBox="-0.6 0 10 10"><path d="M1.400 1.400l7.200 7.200M8.600 1.400l-7.200 7.200" stroke="#C9252C" stroke-width="1.900" fill="none"/></svg></td><td><svg class="ic" style="left:955px;top:69px" width="10" height="10" viewBox="-0.6 0 10 10"><path d="M1.400 1.400l7.200 7.200M8.600 1.400l-7.200 7.200" stroke="#C9252C" stroke-width="1.900" fill="none"/></svg></td><td><svg class="ic" style="left:1121px;top:69px" width="10" height="10" viewBox="-0.3 0 10 10"><path d="M1.400 1.400l7.200 7.200M8.600 1.400l-7.200 7.200" stroke="#C9252C" stroke-width="1.900" fill="none"/></svg></td></tr><tr><td><svg class="ic" style="left:11px;top:97px" width="17" height="6" viewBox="-0.8 -0.2 17 6"><circle cx="2.500" cy="3" r="1.800" fill="none" stroke="#1D75B3" stroke-width="1.100"/><circle cx="8.300" cy="3" r="1.800" fill="none" stroke="#1D75B3" stroke-width="1.100"/><circle cx="14.100" cy="3" r="1.800" fill="none" stroke="#1D75B3" stroke-width="1.100"/></svg><svg class="ic" style="left:37px;top:91px" width="17" height="17" viewBox="-0.45 -0.4 17 17"><circle cx="8.500" cy="8.500" r="7.500" fill="none" stroke="#1D75B3" stroke-width="1.100"/><path d="M7.500 7.300h1.200v4.200c0 .6.300.9.900.9" fill="none" stroke="#1D75B3" stroke-width="1.100" stroke-linecap="round"/><circle cx="8.400" cy="5" r=".8" fill="#1D75B3"/></svg></td><td><span class="t" style="left:74.3px;top:94px;font-size:13px;color:#1f1f1f;letter-spacing:-0.3px;">003</span></td><td><span class="t" style="left:154px;top:94px;font-size:13px;color:#1f1f1f;letter-spacing:-0.08px;">Dodavatel - školení 5</span></td><td><span class="t" style="left:357.8px;top:94px;font-size:13px;color:#1f1f1f;letter-spacing:0.25px;">12345678</span></td><td><span class="t" style="left:458.35px;top:94px;font-size:13px;color:#1f1f1f;letter-spacing:-0.09px;">24. 5. 2025 20:14</span></td><td><span class="t" style="left:608.9px;top:94px;font-size:13px;color:#1f1f1f;letter-spacing:-0.03px;">Vzata zpět</span></td><td><svg class="ic" style="left:815px;top:94px" width="10" height="10" viewBox="-0.6 0 10 10"><path d="M1.400 1.400l7.200 7.200M8.600 1.400l-7.200 7.200" stroke="#C9252C" stroke-width="1.900" fill="none"/></svg></td><td><svg class="ic" style="left:955px;top:94px" width="10" height="10" viewBox="-0.6 0 10 10"><path d="M1.400 1.400l7.200 7.200M8.600 1.400l-7.200 7.200" stroke="#C9252C" stroke-width="1.900" fill="none"/></svg></td><td><svg class="ic" style="left:1121px;top:94px" width="10" height="10" viewBox="-0.3 0 10 10"><path d="M1.400 1.400l7.200 7.200M8.600 1.400l-7.200 7.200" stroke="#C9252C" stroke-width="1.900" fill="none"/></svg></td></tr><tr><td><svg class="ic" style="left:11px;top:122px" width="17" height="6" viewBox="-0.8 -0.2 17 6"><circle cx="2.500" cy="3" r="1.800" fill="none" stroke="#1D75B3" stroke-width="1.100"/><circle cx="8.300" cy="3" r="1.800" fill="none" stroke="#1D75B3" stroke-width="1.100"/><circle cx="14.100" cy="3" r="1.800" fill="none" stroke="#1D75B3" stroke-width="1.100"/></svg><svg class="ic" style="left:37px;top:116px" width="17" height="17" viewBox="-0.45 -0.4 17 17"><circle cx="8.500" cy="8.500" r="7.500" fill="none" stroke="#1D75B3" stroke-width="1.100"/><path d="M7.500 7.300h1.200v4.200c0 .6.300.9.900.9" fill="none" stroke="#1D75B3" stroke-width="1.100" stroke-linecap="round"/><circle cx="8.400" cy="5" r=".8" fill="#1D75B3"/></svg></td><td><span class="t" style="left:74.3px;top:119px;font-size:13px;color:#1f1f1f;letter-spacing:-0.42px;">004</span></td><td><span class="t" style="left:154px;top:119px;font-size:13px;color:#1f1f1f;letter-spacing:-0.08px;">Dodavatel - školení 5</span></td><td><span class="t" style="left:357.8px;top:119px;font-size:13px;color:#1f1f1f;letter-spacing:0.25px;">12345678</span></td><td><span class="t" style="left:458.35px;top:119px;font-size:13px;color:#1f1f1f;letter-spacing:-0.09px;">24. 5. 2025 20:15</span></td><td><span class="t" style="left:608.4px;top:119px;font-size:13px;color:#1f1f1f;letter-spacing:-0.29px;">Otevřena</span></td><td><svg class="ic" style="left:815px;top:119px" width="10" height="10" viewBox="-0.6 0 10 10"><path d="M1.400 1.400l7.200 7.200M8.600 1.400l-7.200 7.200" stroke="#C9252C" stroke-width="1.900" fill="none"/></svg></td><td><svg class="ic" style="left:955px;top:119px" width="10" height="10" viewBox="-0.6 0 10 10"><path d="M1.400 1.400l7.200 7.200M8.600 1.400l-7.200 7.200" stroke="#C9252C" stroke-width="1.900" fill="none"/></svg></td><td><svg class="ic" style="left:1121px;top:119px" width="10" height="10" viewBox="-0.3 0 10 10"><path d="M1.400 1.400l7.200 7.200M8.600 1.400l-7.200 7.200" stroke="#C9252C" stroke-width="1.900" fill="none"/></svg></td></tr><tr><td><svg class="ic" style="left:11px;top:147px" width="17" height="6" viewBox="-0.8 -0.2 17 6"><circle cx="2.500" cy="3" r="1.800" fill="none" stroke="#1D75B3" stroke-width="1.100"/><circle cx="8.300" cy="3" r="1.800" fill="none" stroke="#1D75B3" stroke-width="1.100"/><circle cx="14.100" cy="3" r="1.800" fill="none" stroke="#1D75B3" stroke-width="1.100"/></svg><svg class="ic" style="left:37px;top:141px" width="17" height="17" viewBox="-0.45 -0.4 17 17"><circle cx="8.500" cy="8.500" r="7.500" fill="none" stroke="#1D75B3" stroke-width="1.100"/><path d="M7.500 7.300h1.200v4.200c0 .6.300.9.900.9" fill="none" stroke="#1D75B3" stroke-width="1.100" stroke-linecap="round"/><circle cx="8.400" cy="5" r=".8" fill="#1D75B3"/></svg></td><td><span class="t" style="left:74.3px;top:144px;font-size:13px;color:#1f1f1f;letter-spacing:-0.42px;">005</span></td><td><span class="t" style="left:154px;top:144px;font-size:13px;color:#1f1f1f;letter-spacing:-0.08px;">Dodavatel - školení 6</span></td><td><span class="t" style="left:358.55px;top:144px;font-size:13px;color:#1f1f1f;letter-spacing:0.14px;">45359326</span></td><td><span class="t" style="left:458.35px;top:144px;font-size:13px;color:#1f1f1f;letter-spacing:-0.09px;">24. 5. 2025 20:16</span></td><td><span class="t" style="left:608.4px;top:144px;font-size:13px;color:#1f1f1f;letter-spacing:-0.29px;">Otevřena</span></td><td><svg class="ic" style="left:815px;top:144px" width="10" height="10" viewBox="-0.6 0 10 10"><path d="M1.400 1.400l7.200 7.200M8.600 1.400l-7.200 7.200" stroke="#C9252C" stroke-width="1.900" fill="none"/></svg></td><td><svg class="ic" style="left:955px;top:144px" width="10" height="10" viewBox="-0.6 0 10 10"><path d="M1.400 1.400l7.200 7.200M8.600 1.400l-7.200 7.200" stroke="#C9252C" stroke-width="1.900" fill="none"/></svg></td><td><svg class="ic" style="left:1121px;top:144px" width="10" height="10" viewBox="-0.3 0 10 10"><path d="M1.400 1.400l7.200 7.200M8.600 1.400l-7.200 7.200" stroke="#C9252C" stroke-width="1.900" fill="none"/></svg></td></tr><tr><td><svg class="ic" style="left:11px;top:172px" width="17" height="6" viewBox="-0.8 -0.2 17 6"><circle cx="2.500" cy="3" r="1.800" fill="none" stroke="#1D75B3" stroke-width="1.100"/><circle cx="8.300" cy="3" r="1.800" fill="none" stroke="#1D75B3" stroke-width="1.100"/><circle cx="14.100" cy="3" r="1.800" fill="none" stroke="#1D75B3" stroke-width="1.100"/></svg><svg class="ic" style="left:37px;top:166px" width="17" height="17" viewBox="-0.45 -0.4 17 17"><circle cx="8.500" cy="8.500" r="7.500" fill="none" stroke="#1D75B3" stroke-width="1.100"/><path d="M7.500 7.300h1.200v4.200c0 .6.300.9.900.9" fill="none" stroke="#1D75B3" stroke-width="1.100" stroke-linecap="round"/><circle cx="8.400" cy="5" r=".8" fill="#1D75B3"/></svg></td><td><span class="t" style="left:74.3px;top:169px;font-size:13px;color:#1f1f1f;letter-spacing:-0.3px;">006</span></td><td><span class="t" style="left:154px;top:169px;font-size:13px;color:#1f1f1f;letter-spacing:-0.08px;">Dodavatel - školení 7</span></td><td><span class="t" style="left:357.8px;top:169px;font-size:13px;color:#1f1f1f;letter-spacing:0.25px;">12345678</span></td><td><span class="t" style="left:458.35px;top:169px;font-size:13px;color:#1f1f1f;letter-spacing:-0.08px;">24. 5. 2025 20:17</span></td><td><span class="t" style="left:608.4px;top:169px;font-size:13px;color:#1f1f1f;letter-spacing:-0.29px;">Otevřena</span></td><td><svg class="ic" style="left:815px;top:169px" width="10" height="10" viewBox="-0.6 0 10 10"><path d="M1.400 1.400l7.200 7.200M8.600 1.400l-7.200 7.200" stroke="#C9252C" stroke-width="1.900" fill="none"/></svg></td><td><svg class="ic" style="left:955px;top:169px" width="10" height="10" viewBox="-0.6 0 10 10"><path d="M1.400 1.400l7.200 7.200M8.600 1.400l-7.200 7.200" stroke="#C9252C" stroke-width="1.900" fill="none"/></svg></td><td><svg class="ic" style="left:1121px;top:169px" width="10" height="10" viewBox="-0.3 0 10 10"><path d="M1.400 1.400l7.200 7.200M8.600 1.400l-7.200 7.200" stroke="#C9252C" stroke-width="1.900" fill="none"/></svg></td></tr><tr><td><svg class="ic" style="left:11px;top:197px" width="17" height="6" viewBox="-0.8 -0.2 17 6"><circle cx="2.500" cy="3" r="1.800" fill="none" stroke="#1D75B3" stroke-width="1.100"/><circle cx="8.300" cy="3" r="1.800" fill="none" stroke="#1D75B3" stroke-width="1.100"/><circle cx="14.100" cy="3" r="1.800" fill="none" stroke="#1D75B3" stroke-width="1.100"/></svg><svg class="ic" style="left:37px;top:191px" width="17" height="17" viewBox="-0.45 -0.4 17 17"><circle cx="8.500" cy="8.500" r="7.500" fill="none" stroke="#1D75B3" stroke-width="1.100"/><path d="M7.500 7.300h1.200v4.200c0 .6.300.9.900.9" fill="none" stroke="#1D75B3" stroke-width="1.100" stroke-linecap="round"/><circle cx="8.400" cy="5" r=".8" fill="#1D75B3"/></svg></td><td><span class="t" style="left:74.3px;top:194px;font-size:13px;color:#1f1f1f;letter-spacing:-0.3px;">007</span></td><td><span class="t" style="left:154px;top:194px;font-size:13px;color:#1f1f1f;letter-spacing:-0.1px;">Dodavatel - školení 4</span></td><td><span class="t" style="left:357.8px;top:194px;font-size:13px;color:#1f1f1f;letter-spacing:0.25px;">12345678</span></td><td><span class="t" style="left:458.35px;top:194px;font-size:13px;color:#1f1f1f;letter-spacing:-0.09px;">24. 5. 2025 20:36</span></td><td><span class="t" style="left:607.9px;top:194px;font-size:13px;color:#1f1f1f;letter-spacing:0.04px;">Podána po lhůtě</span></td><td><svg class="ic" style="left:814px;top:194px" width="12" height="10" viewBox="-0.7 0 12 10"><path d="M1.300 5.400l3 2.900 6.600-7" stroke="#2FB130" stroke-width="2.200" fill="none" stroke-linejoin="miter"/></svg></td><td><svg class="ic" style="left:955px;top:194px" width="10" height="10" viewBox="-0.6 0 10 10"><path d="M1.400 1.400l7.200 7.200M8.600 1.400l-7.200 7.200" stroke="#C9252C" stroke-width="1.900" fill="none"/></svg></td><td><svg class="ic" style="left:1121px;top:194px" width="10" height="10" viewBox="-0.3 0 10 10"><path d="M1.400 1.400l7.200 7.200M8.600 1.400l-7.200 7.200" stroke="#C9252C" stroke-width="1.900" fill="none"/></svg></td></tr><tr><td><svg class="ic" style="left:11px;top:222px" width="17" height="6" viewBox="-0.8 -0.2 17 6"><circle cx="2.500" cy="3" r="1.800" fill="none" stroke="#1D75B3" stroke-width="1.100"/><circle cx="8.300" cy="3" r="1.800" fill="none" stroke="#1D75B3" stroke-width="1.100"/><circle cx="14.100" cy="3" r="1.800" fill="none" stroke="#1D75B3" stroke-width="1.100"/></svg><svg class="ic" style="left:37px;top:216px" width="17" height="17" viewBox="-0.45 -0.4 17 17"><circle cx="8.500" cy="8.500" r="7.500" fill="none" stroke="#1D75B3" stroke-width="1.100"/><path d="M7.500 7.300h1.200v4.200c0 .6.300.9.900.9" fill="none" stroke="#1D75B3" stroke-width="1.100" stroke-linecap="round"/><circle cx="8.400" cy="5" r=".8" fill="#1D75B3"/></svg></td><td><span class="t" style="left:74.3px;top:219px;font-size:13px;color:#1f1f1f;letter-spacing:-0.3px;">008</span></td><td><span class="t" style="left:154px;top:219px;font-size:13px;color:#1f1f1f;letter-spacing:-0.08px;">Dodavatel - školení 6</span></td><td><span class="t" style="left:358.55px;top:219px;font-size:13px;color:#1f1f1f;letter-spacing:0.14px;">45359326</span></td><td><span class="t" style="left:458.35px;top:219px;font-size:13px;color:#1f1f1f;letter-spacing:-0.09px;">24. 5. 2025 20:29</span></td><td><span class="t" style="left:608.4px;top:219px;font-size:13px;color:#1f1f1f;letter-spacing:-0.13px;">Otevírání zahájeno</span></td><td><svg class="ic" style="left:815px;top:219px" width="10" height="10" viewBox="-0.6 0 10 10"><path d="M1.400 1.400l7.200 7.200M8.600 1.400l-7.200 7.200" stroke="#C9252C" stroke-width="1.900" fill="none"/></svg></td><td><svg class="ic" style="left:954px;top:219px" width="12" height="10" viewBox="-0.7 0 12 10"><path d="M1.300 5.400l3 2.900 6.600-7" stroke="#2FB130" stroke-width="2.200" fill="none" stroke-linejoin="miter"/></svg></td><td><svg class="ic" style="left:1121px;top:219px" width="10" height="10" viewBox="-0.3 0 10 10"><path d="M1.400 1.400l7.200 7.200M8.600 1.400l-7.200 7.200" stroke="#C9252C" stroke-width="1.900" fill="none"/></svg></td></tr></tbody></table></section>
</main>
</body></html>
